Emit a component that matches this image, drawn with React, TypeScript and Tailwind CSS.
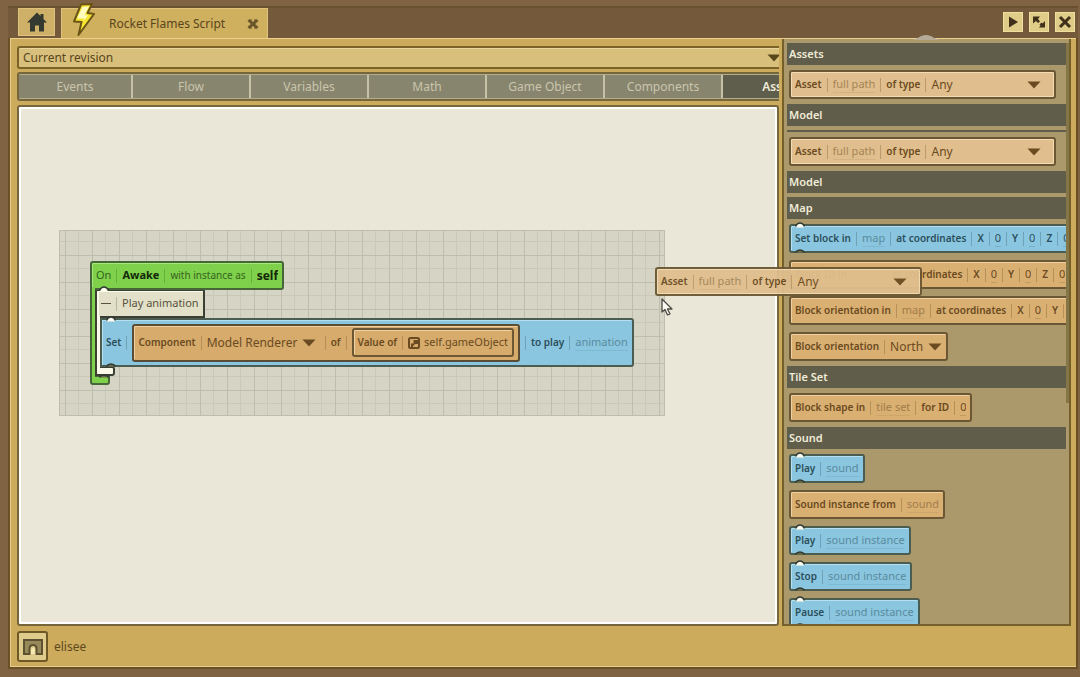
import React from "react"
import clsx from "clsx"

type Tone = "blue" | "tan" | "sand"

const tones: Record<Tone, string> = {
  blue: "border-[#4b5c50] bg-[#8ac6df] text-[#2c4f5c] shadow-[inset_1px_1px_0_#b4e0f0]",
  tan: "border-[#6b5733] bg-[#d9af72] text-[#6a4a20] shadow-[inset_1px_1px_0_#f0d0a0]",
  sand: "border-[#6b5733] bg-[#e0be8d] text-[#6a4a20] shadow-[inset_0_0_0_1px_#f3dcb4]",
}

const Arrow = ({ className }: { className?: string }) => (
  <svg viewBox="0 0 14 8" className={clsx("h-2 w-3.5 shrink-0", className)} aria-hidden="true">
    <path d="M0.5 0.5h13L7 7.5z" fill="currentColor" />
  </svg>
)

const Sep = () => <span className="h-3.5 w-px shrink-0 bg-current opacity-30" />

const Label = ({ children }: { children: React.ReactNode }) => (
  <span className="shrink-0 text-[10px] font-semibold whitespace-nowrap">{children}</span>
)

const Slot = ({ name }: { name: string }) => (
  <input
    aria-label={name}
    placeholder={name}
    className="field-sizing-content h-4 shrink-0 border-b border-current/10 text-[11px] outline-none placeholder:text-current placeholder:opacity-50"
  />
)

const Num = ({ name }: { name: string }) => (
  <input
    aria-label={name}
    defaultValue="0"
    className="field-sizing-content h-4 shrink-0 border-b border-current/20 text-[11px] outline-none"
  />
)

const Coords = () => (
  <>
    {["X", "Y", "Z"].map((axis) => (
      <React.Fragment key={axis}>
        <Sep />
        <Label>{axis}</Label>
        <Sep />
        <Num name={axis} />
      </React.Fragment>
    ))}
  </>
)

const Pick = ({ name, value, wide }: { name: string; value: string; wide?: boolean }) => (
  <span className={clsx("flex shrink-0 items-center justify-between gap-1", wide && "w-[110px]")}>
    <select aria-label={name} className="appearance-none text-[12px] outline-none">
      <option>{value}</option>
    </select>
    <Arrow />
  </span>
)

const Nubs = () => (
  <>
    <svg viewBox="0 0 10 6" className="absolute -top-1 left-1 h-1.5 w-2.5" aria-hidden="true">
      <path d="M1 5.5C1 2.5 2.5 1 5 1s4 1.5 4 4.500z" fill="#fffdf0" />
      <path d="M0.500 4.500C1.500 2 2.500 1 5 1s3.500 1 4.500 3.500" fill="none" stroke="#2f3a32" strokeWidth="1.500" />
    </svg>
    <svg viewBox="0 0 10 4" className="absolute -bottom-0.5 left-1 h-1 w-2.5" aria-hidden="true">
      <path d="M0.500 3.500C1.500 1.500 2.500 1 5 1s3.500 0.500 4.500 2.500" fill="#6b6a4a" stroke="#2f3a32" strokeWidth="1.500" />
    </svg>
  </>
)

const Block = ({ tone, children }: { tone: Tone; children: React.ReactNode }) => (
  <div className={clsx("relative flex h-[29px] w-max items-center gap-[5px] rounded-[3px] border-2 px-1", tones[tone])}>
    {tone === "blue" && <Nubs />}
    {children}
  </div>
)

const AssetBlock = () => (
  <Block tone="sand">
    <Label>Asset</Label>
    <Sep />
    <Slot name="full path" />
    <Sep />
    <Label>of type</Label>
    <Sep />
    <Pick name="Asset type" value="Any" wide />
    <span className="w-1" />
  </Block>
)

const Section = ({ title, children }: { title: string; children?: React.ReactNode }) => (
  <section>
    <h2 className="h-[22px] bg-[#605d4b] px-0.5 text-[11px] leading-[22px] font-semibold text-[#f0ecd8]">{title}</h2>
    {children ? <div className="flex flex-col gap-[7px] px-0.5 py-[5px]">{children}</div> : <div className="h-1" />}
  </section>
)

const Palette = () => (
  <aside className="flex w-[289px] shrink-0 border-2 border-t-0 border-[#75602c] bg-[#ab996c] pt-1 pl-[3px]">
    <div className="min-w-0 flex-1 overflow-hidden">
      <Section title="Assets">
        <AssetBlock />
      </Section>
      <Section title="Model" />
      <div className="h-0.5 bg-[#605d4b]" />
      <div className="px-0.5 py-[5px]">
        <AssetBlock />
      </div>
      <Section title="Model" />
      <Section title="Map">
        <Block tone="blue">
          <Label>Set block in</Label>
          <Sep />
          <Slot name="map" />
          <Sep />
          <Label>at coordinates</Label>
          <Coords />
        </Block>
        <Block tone="tan">
          <Label>Block ID in</Label>
          <Sep />
          <Slot name="map" />
          <Sep />
          <Label>at coordinates</Label>
          <Coords />
        </Block>
        <Block tone="tan">
          <Label>Block orientation in</Label>
          <Sep />
          <Slot name="map" />
          <Sep />
          <Label>at coordinates</Label>
          <Coords />
        </Block>
        <Block tone="tan">
          <Label>Block orientation</Label>
          <Sep />
          <Pick name="Block orientation" value="North" />
        </Block>
      </Section>
      <Section title="Tile Set">
        <Block tone="tan">
          <Label>Block shape in</Label>
          <Sep />
          <Slot name="tile set" />
          <Sep />
          <Label>for ID</Label>
          <Sep />
          <Num name="Block ID" />
        </Block>
      </Section>
      <Section title="Sound">
        <Block tone="blue">
          <Label>Play</Label>
          <Sep />
          <Slot name="sound" />
        </Block>
        <Block tone="tan">
          <Label>Sound instance from</Label>
          <Sep />
          <Slot name="sound" />
        </Block>
        {["Play", "Stop", "Pause"].map((verb) => (
          <Block key={verb} tone="blue">
            <Label>{verb}</Label>
            <Sep />
            <Slot name="sound instance" />
          </Block>
        ))}
      </Section>
    </div>
    <div className="w-[3px] shrink-0">
      <div className="h-[360px] bg-[#857648]" />
    </div>
  </aside>
)

const Script = () => (
  <div className="h-[186px] w-[606px] border border-[#bfbdad] bg-[#d6d4c4] bg-[linear-gradient(#bfbdae_1px,transparent_1px),linear-gradient(90deg,#bfbdae_1px,transparent_1px),linear-gradient(#cac8b9_1px,transparent_1px),linear-gradient(90deg,#cac8b9_1px,transparent_1px)] bg-size-[27px_27px] bg-position-[0_24px,5px_0,0_10px,18px_0] px-[30px] py-[30px]">
    <div className="flex w-max flex-col items-start">
      <div className="flex h-[29px] items-center gap-[5px] rounded-[3px] border-2 border-[#46663a] bg-[#7fd04b] px-1 text-[#35641c] shadow-[inset_1px_1px_0_#a4e878]">
        <span className="text-[11px]">On</span>
        <Sep />
        <input aria-label="Event" defaultValue="Awake" className="field-sizing-content text-[11px] font-bold text-[#122808] outline-none" />
        <Sep />
        <span className="text-[10px]">with instance as</span>
        <Sep />
        <input aria-label="Instance name" defaultValue="self" className="field-sizing-content text-[12px] font-bold text-[#122808] outline-none" />
      </div>
      <div className="flex">
        <div className="relative z-10 -my-0.5 w-[5px] border-l-2 border-[#46663a] bg-[#7fd04b]" />
        <div className="relative flex flex-col items-start">
          <Nubs />
          <div className="flex h-7 items-center gap-[5px] border-2 border-t border-[#3c4034] bg-[#e3e0c9] px-1 text-[#57523c] shadow-[inset_2px_1px_0_#fbf9e8]">
            <button aria-label="Collapse" className="flex h-4 w-2.5 items-center">
              <span className="h-px w-full bg-current" />
            </button>
            <Sep />
            <input aria-label="Comment" defaultValue="Play animation" className="field-sizing-content text-[11px] outline-none" />
          </div>
          <div className="flex">
            <div className="relative z-10 -my-0.5 w-[5px] border-l-2 border-[#3c4034] bg-[#fbf9e8]" />
            <div className="relative flex h-[49px] items-center gap-[5px] rounded-r-[3px] border-2 border-[#4b5c50] bg-[#8ac6df] px-1 text-[#2c4f5c] shadow-[inset_1px_1px_0_#b4e0f0]">
              <Nubs />
              <Label>Set</Label>
              <Sep />
              <div className="flex h-[38px] items-center gap-[5px] rounded-[3px] border-2 border-[#5a4d34] bg-[#d6ab6c] px-1 text-[#6a4a20] shadow-[inset_1px_1px_0_#f0d0a0]">
                <Label>Component</Label>
                <Sep />
                <span className="pr-1">
                  <Pick name="Component type" value="Model Renderer" />
                </span>
                <Sep />
                <Label>of</Label>
                <Sep />
                <div className="flex h-[29px] items-center gap-[5px] rounded-[3px] border-2 border-[#6b5733] px-1 shadow-[inset_1px_1px_0_#f0d0a0]">
                  <Label>Value of</Label>
                  <Sep />
                  <button className="flex items-center gap-1 text-[11px]">
                    <svg viewBox="0 0 12 12" className="h-3 w-3" aria-hidden="true">
                      <rect x="1" y="1" width="10" height="10" rx="1.500" fill="none" stroke="currentColor" strokeWidth="2" />
                      <path d="M3 11V6.500h2.500V3H10v4H6.500v1.500H5V11z" fill="currentColor" />
                    </svg>
                    self.gameObject
                  </button>
                </div>
              </div>
              <Sep />
              <Label>to play</Label>
              <Sep />
              <Slot name="animation" />
            </div>
          </div>
          <div className="-mt-px h-2.5 w-5 rounded-r-[3px] border-2 border-[#3c4034] bg-[#fbf9e8]" />
        </div>
      </div>
      <div className="-mt-px h-2.5 w-5 rounded-b-[3px] border-2 border-[#46663a] bg-[#7fd04b]" />
    </div>
  </div>
)

const tabs = ["Events", "Flow", "Variables", "Math", "Game Object", "Components", "Assets"]

const Editor = () => (
  <div className="flex min-w-0 flex-1 flex-col overflow-hidden pt-[7px]">
    <div className="relative flex h-[23px] shrink-0 items-center rounded-l-[3px] border-2 border-r-0 border-[#7a6228] bg-[#d8c07c] text-[#58451c] shadow-[inset_0_1px_0_#e8d69a]">
      <select aria-label="Revision" className="w-full appearance-none pl-1 text-[12px] outline-none">
        <option>Current revision</option>
      </select>
      <Arrow className="pointer-events-none absolute -right-0.5" />
    </div>
    <nav className="mt-[3px] flex h-[29px] shrink-0 overflow-hidden rounded-l-[3px] border-2 border-r-0 border-[#75673b] bg-[#b3ad8a] py-px">
      {tabs.map((tab, i) => (
        <button
          key={tab}
          className={clsx(
            "shrink-0 border-r-2 border-[#c5c1a6] text-[12px]",
            i === 0 ? "w-[114px]" : "w-[118px]",
            tab === "Assets" ? "bg-[#5f5e4d] font-semibold text-[#f0ecd8]" : "bg-[#88856f] text-[#c9c5ac]"
          )}
        >
          {tab}
        </button>
      ))}
    </nav>
    <div className="mt-1 min-h-0 flex-1 rounded-[3px] border-2 border-[#75673b] bg-white p-0.5">
      <div className="h-full overflow-hidden bg-[#eae7d9] pt-[121px] pl-[38px]">
        <Script />
      </div>
    </div>
  </div>
)

const WindowButton = ({ name, children }: { name: string; children: React.ReactNode }) => (
  <button aria-label={name} className="flex h-5 w-5 items-center justify-center border border-[#efe0a0] bg-[#dfcc88] text-[#40301a]">
    <svg viewBox="0 0 14 14" className="h-3.5 w-3.5" aria-hidden="true">
      {children}
    </svg>
  </button>
)

const TitleBar = () => (
  <header className="flex h-8 shrink-0 items-end border-t-2 border-[#69502f] bg-[#745a3a] pl-2.5">
    <button aria-label="Home" className="mb-0.5 flex h-7 w-[37px] items-center justify-center border border-[#dfc37c] bg-[#cfb068]">
      <svg viewBox="0 0 20 20" className="h-5 w-5" aria-hidden="true">
        <path d="M10 0.500L0 10.500h3V19.500h5v-6h4v6h5v-9h3l-3.500-3.500V2h-3v2z" fill="#343a30" />
      </svg>
    </button>
    <div className="relative ml-1.5 flex h-[30px] w-[207px] items-center border border-b-0 border-[#dfc37c] bg-[#cfb05f] pr-2 pl-[47px] text-[#59451c]">
      <svg viewBox="0 0 24 34" className="absolute -top-1.5 left-2.5 h-[34px] w-6" aria-hidden="true">
        <path d="M9 1.500L20 1L15.500 10L22 11L6.500 32L9.500 19L2 18.500z" fill="#f7e431" stroke="#6a5416" strokeWidth="2" strokeLinejoin="round" />
        <path d="M10.500 4L17 3.500L12.500 12L16 12.500L11.500 18L12 15.500L5 15.500z" fill="#fffbc0" />
      </svg>
      <span className="flex-1 text-[12px] whitespace-nowrap">Rocket Flames Script</span>
      <button aria-label="Close tab">
        <svg viewBox="0 0 12 12" className="h-3 w-3" aria-hidden="true">
          <path d="M1.500 2L10.500 10M10.500 2L1.500 10" stroke="#69552c" strokeWidth="3" />
          <path d="M4 1v2M8 1v2M4 9v2M8 9v2" stroke="#69552c" strokeWidth="1" />
        </svg>
      </button>
    </div>
    <div className="mr-[3px] mb-1.5 ml-auto flex gap-1.5">
      <WindowButton name="Run">
        <path d="M3 1.500L12 7L3 12.500z" fill="currentColor" />
      </WindowButton>
      <WindowButton name="Detach">
        <path d="M1 1.500h7L6 4l2 2.500L6 8 4 6 1 8.500zM13 12.500H7L8.500 10.500 7.500 9.500 9.500 7.500 10.500 8.500 13 6z" fill="currentColor" />
      </WindowButton>
      <WindowButton name="Close">
        <path d="M2 2L12 12M12 2L2 12" stroke="currentColor" strokeWidth="3" />
      </WindowButton>
    </div>
  </header>
)

const App = () => (
  <div className="relative flex h-screen flex-col overflow-hidden bg-[#806343] pt-1.5 pr-0.5 pb-2 pl-2 font-['Noto_Sans',sans-serif]">
    <TitleBar />
    <main className="flex min-h-0 flex-1 flex-col border-2 border-t-0 border-[#6a4f27] bg-[#ccab5d] shadow-[inset_0_1px_0_#ecd08c]">
      <div className="mt-px flex min-h-0 flex-1 gap-[3px] pr-[5px] pl-[7px] shadow-[inset_1px_0_0_#e6cd8a]">
        <Editor />
        <Palette />
      </div>
      <footer className="flex h-[41px] shrink-0 items-center gap-1.5 pl-[7px] text-[12px] text-[#604a1c] shadow-[inset_1px_-1px_0_#e6cd8a]">
        <button aria-label="elisee" className="flex h-[31px] w-[31px] items-center justify-center rounded-[3px] border-2 border-[#6e5826] bg-[#dfcb8b]">
          <svg viewBox="0 0 20 16" className="h-4 w-5" aria-hidden="true">
            <path d="M1 1h18v14h-5.500V9.500C13.500 7.500 12 6 10 6S6.500 7.500 6.500 9.500V15H1z" fill="#98895a" stroke="#5c522f" strokeWidth="2" />
            <path d="M8 15v-4.500c0-2 4-2 4 0V15" fill="#f4e7b0" />
          </svg>
        </button>
        elisee
      </footer>
    </main>

    <svg viewBox="0 0 28 6" className="absolute top-[34px] left-[912px] h-1.5 w-7" aria-hidden="true">
      <path d="M0 6C6 5 8 1 14 1s8 4 14 5z" fill="#b5aa98" />
    </svg>
    <div className="absolute top-[267px] left-[655px] opacity-95">
      <AssetBlock />
    </div>
    <svg viewBox="0 0 12 18" className="absolute top-[298px] left-[661px] h-[18px] w-3" aria-hidden="true">
      <path d="M1 1v13l3-2.500L6.500 17l2.500-1-2.500-5H11z" fill="#fbfaf2" stroke="#4c4a42" strokeWidth="1.300" strokeLinejoin="round" />
    </svg>
  </div>
)

export default App
